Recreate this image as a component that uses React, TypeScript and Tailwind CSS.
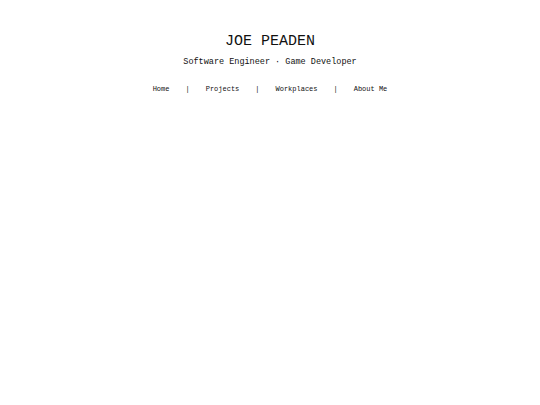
export default function App() {
  const items = ["Home", "Projects", "Workplaces", "About Me"];
  return (
    <div className="min-h-[405px] w-full bg-white text-[#111]" style={{ fontFamily: '"Liberation Mono", monospace' }}>
      <header className="flex flex-col items-center pt-[33px]">
        <h1 className="text-[15px] leading-[18px] font-normal">JOE PEADEN</h1>
        <p className="mt-[6px] text-[8.5px] leading-[10px]">Software Engineer · Game Developer</p>
        <nav className="mt-[18px] flex items-center gap-[16px] text-[7px] leading-[9px]">
          {items.map((it, i) => (
            <div key={it} className="flex items-center gap-[16px]">
              {i > 0 && <span>|</span>}
              <a href="#" className="text-[#111] no-underline">{it}</a>
            </div>
          ))}
        </nav>
      </header>
    </div>
  );
}
